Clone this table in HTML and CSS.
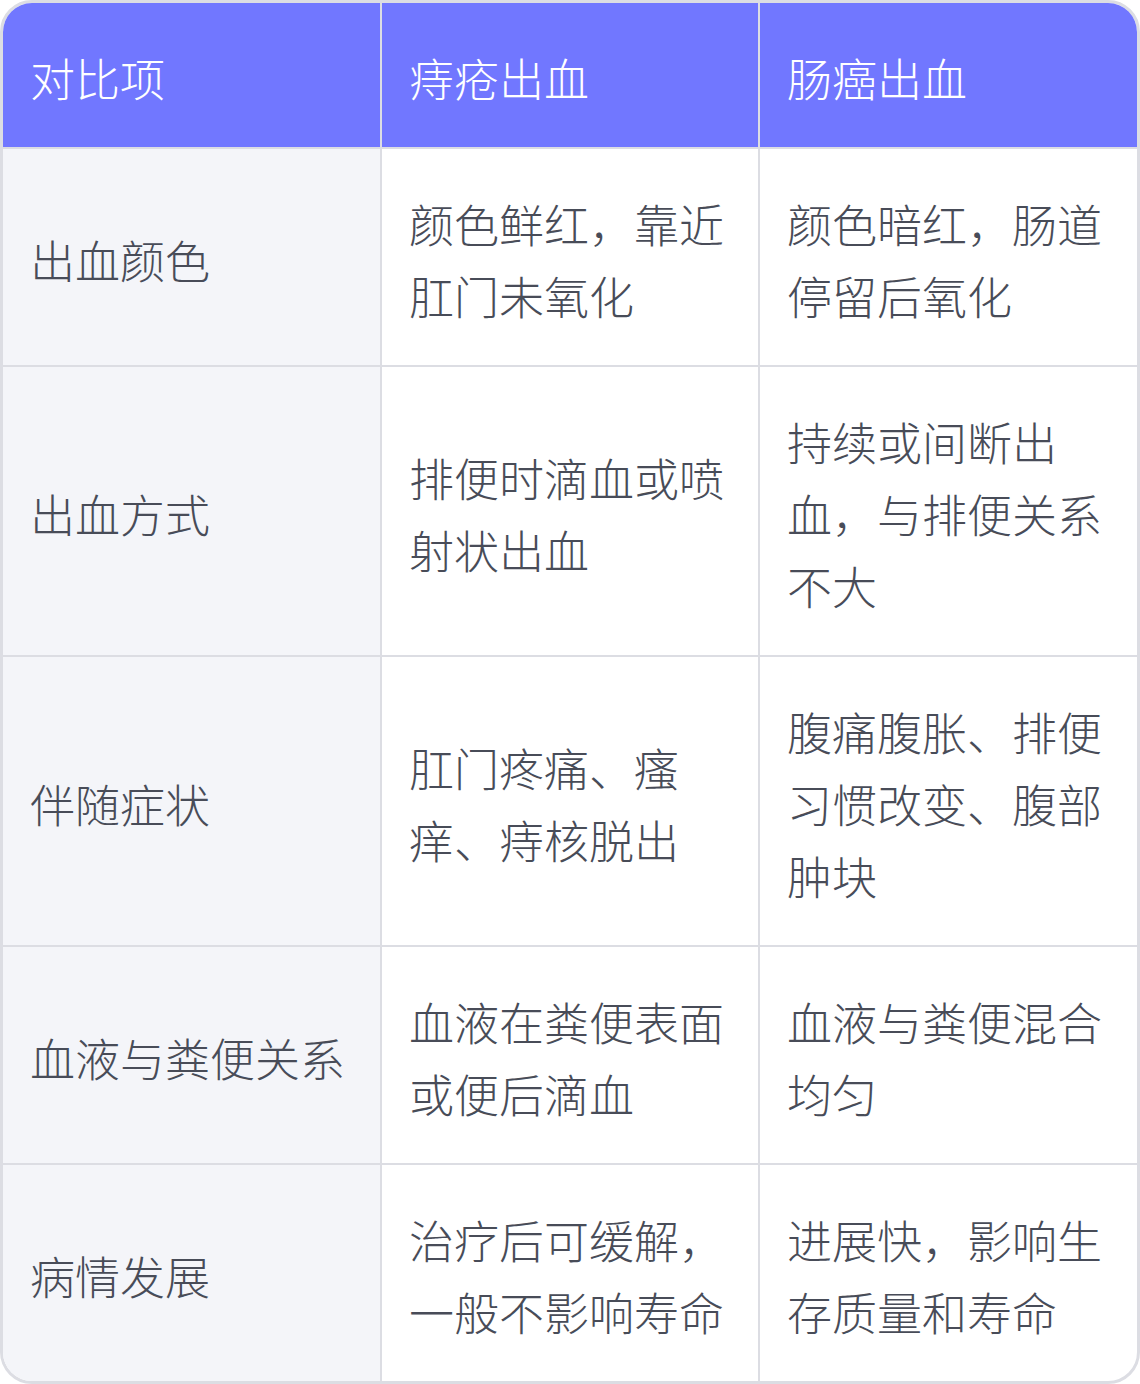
FILE: index.html
```html
<!DOCTYPE html>
<html lang="zh-CN">
<head>
<meta charset="utf-8">
<link rel="stylesheet" href="styles.css">
</head>
<body>
<div class="card">
  <table class="cmp">
    <thead>
      <tr><th>对比项</th><th>痔疮出血</th><th>肠癌出血</th></tr>
    </thead>
    <tbody>
      <tr><td class="key">出血颜色</td><td>颜色鲜红，靠近肛门未氧化</td><td>颜色暗红，肠道停留后氧化</td></tr>
      <tr><td class="key">出血方式</td><td>排便时滴血或喷射状出血</td><td>持续或间断出血，与排便关系不大</td></tr>
      <tr><td class="key">伴随症状</td><td>肛门疼痛、瘙痒、痔核脱出</td><td>腹痛腹胀、排便习惯改变、腹部肿块</td></tr>
      <tr><td class="key">血液与粪便关系</td><td>血液在粪便表面或便后滴血</td><td>血液与粪便混合均匀</td></tr>
      <tr><td class="key">病情发展</td><td>治疗后可缓解，一般不影响寿命</td><td>进展快，影响生存质量和寿命</td></tr>
    </tbody>
  </table>
</div>
</body>
</html>
```

FILE: styles.css
```css
html, body {
  margin: 0;
  padding: 0;
  background: #ffffff;
}
body {
  font-family: "Noto Sans CJK SC", "Noto Sans", sans-serif;
}
.card {
  width: 1140px;
  box-sizing: border-box;
  border: 3px solid #dcdde3;
  border-radius: 32px;
  overflow: hidden;
  background: #ffffff;
}
.cmp {
  width: 100%;
  border-collapse: collapse;
  table-layout: fixed;
}
.cmp th, .cmp td {
  padding: 39px 26px 33px 27px;
  font-size: 45px;
  line-height: 72px;
  text-align: left;
  vertical-align: middle;
  border: 2px solid #dcdde3;
  word-break: break-all;
}
.cmp tr > :first-child { border-left: none; }
.cmp tr > :last-child { border-right: none; }
.cmp thead th { border-top: none; }
.cmp tbody tr:last-child td { border-bottom: none; }
.cmp th {
  background: #7177ff;
  color: #ffffff;
  font-weight: 300;
}
.cmp td {
  color: #484c58;
  font-weight: 300;
}
.cmp td.key {
  background: #f4f5f9;
}
```
